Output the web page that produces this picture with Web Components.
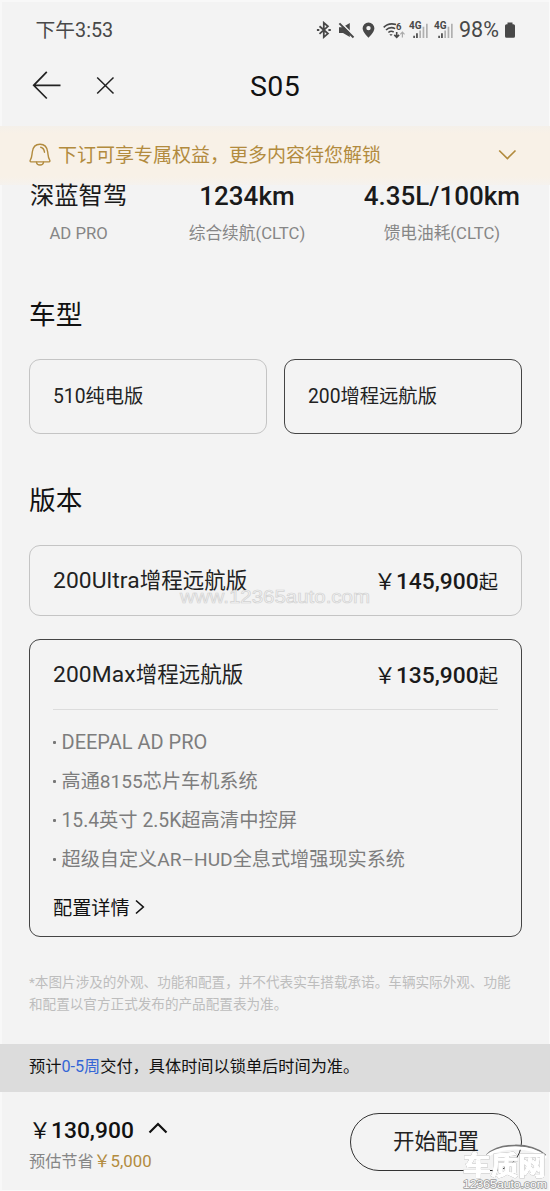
<!DOCTYPE html>
<html lang="zh-CN">
<head>
<meta charset="utf-8">
<title>S05</title>
<style>
html,body{margin:0;padding:0}
body{width:550px;height:1191px;overflow:hidden;background:#f3f3f3;font-family:Roboto,"Noto Sans CJK SC",sans-serif;color:#1a1a1a}
</style>
</head>
<body>
<config-page></config-page>
<script>
const define = (name, css, html) => customElements.define(name, class extends HTMLElement {
  constructor() {
    super();
    this.attachShadow({ mode: 'open' }).innerHTML = `<style>*{box-sizing:border-box}svg{display:block;flex:none}${css}</style>${html}`;
  }
});

define('signal-bars', `
:host{display:block;position:relative;width:20px;height:18px;flex:none}
span{position:absolute;left:0;top:0;font:700 10px/9px Roboto,sans-serif;color:#484848}`,
`<svg width="20" height="18" viewBox="0 0 20 18"><g fill="#484848"><path d="M4.3 14.8h1.6v2.2H4.3zM7.1 12.3h1.7V17H7.1z"/></g><path fill="#b0b0b0" d="M10.3 9.500h1.7v7.500h-1.7zM13.6 5.8h1.7V17h-1.7zM17 2.8h1.7V17H17z"/></svg><span>4G</span>`);

define('status-bar', `
:host{display:flex;height:60px;padding:0 33px 0 35.5px;align-items:center;color:#484848}
.time{font-size:19.8px;line-height:24px;flex:1;padding-top:1px}
.icons{display:flex;align-items:center}
.pct{font-size:21.500px;line-height:24px;margin-left:5px;width:43px}`,
`<div class="time">下午3:53</div>
<div class="icons">
<svg width="16" height="18" viewBox="0 0 16 18" style="margin-right:6px" fill="none" stroke="#484848" stroke-width="1.800"><path d="M3.5 5.2l8.4 7.4-4.1 3.5V1.8l4.1 3.5-8.4 7.5"/><path d="M.9 8.9h2.4M12.400 8.9h2.4" stroke-width="2"/></svg>
<svg width="17" height="18" viewBox="0 0 17 18" style="margin-right:7px"><path fill="#484848" d="M1 6.3h3.6L11.8 2v14L5 12H1z"/><path d="M3.600 2.200L17 15.600" stroke="#f3f3f3" stroke-width="1.600"/><path d="M1.4 2.4L15.500 16.500" stroke="#484848" stroke-width="2"/></svg>
<svg width="13" height="18" viewBox="0 0 13 18" style="margin-right:8px"><path fill="#484848" fill-rule="evenodd" d="M6.5 1.400A5.9 5.9 0 0 0 .6 7.3c0 4.2 5.9 9.5 5.9 9.5s5.9-5.3 5.9-9.5a5.9 5.9 0 0 0-5.9-5.9zm0 3.5a2.2 2.2 0 1 1 0 4.4 2.2 2.2 0 0 1 0-4.4z"/></svg>
<svg width="22" height="18" viewBox="0 0 22 18" style="margin-right:4px" fill="none" stroke="#484848" stroke-width="1.6"><path d="M.7 6.4C4 3 8.500 2.200 13 3.500M3 9c2.400-2.400 6-3 9.200-1.400M5.400 11.500c1.500-1.300 3.600-1.500 5.300-.5"/><path d="M6.400 13.300h3.200L8 15z" fill="#484848" stroke="none"/><path d="M13.700 11v5.200M11.300 13.900l2.400 2.500 2.400-2.500"/><path d="M19.400 16.500v-5.200M17.300 13.400l2.100-2.200 2.100 2.200" stroke="#aaa" stroke-width="1.200"/><text x="13" y="9.200" fill="#484848" stroke="none" font-size="9.500" font-weight="700" font-family="Roboto">6</text></svg>
<signal-bars style="margin-right:5px"></signal-bars><signal-bars></signal-bars>
<span class="pct">98%</span>
<svg width="12" height="18" viewBox="0 0 12 18" style="margin-left:2px;margin-right:1px"><path fill="#484848" d="M3.500 1.500h5v1.700h1A1.500 1.500 0 0 1 11 4.700v10.600a1.500 1.500 0 0 1-1.500 1.500h-7A1.500 1.500 0 0 1 1 15.300V4.700a1.500 1.500 0 0 1 1.500-1.500h1z"/></svg>
</div>`);

define('nav-bar', `
:host{display:grid;grid-template-columns:1fr auto 1fr;height:66px;align-items:start;padding:10px 32px 0}
.l{display:flex;gap:34px;padding-top:1px}
h1{margin:0;font-weight:400;font-size:28.500px;line-height:34px;letter-spacing:.4px;color:#111}`,
`<div class="l"><svg width="30" height="30" viewBox="0 0 30 30" fill="none" stroke="#222" stroke-width="1.700"><path d="M14.800.8L1.700 14.300l13.100 13.200M1.700 14.300h26.800"/></svg>
<svg width="19" height="30" viewBox="0 0 19 30" stroke="#222" stroke-width="1.500"><path d="M1.200 6.500l16.300 16M17.500 6.500l-16.300 16"/></svg></div><h1>S05</h1>`);

define('benefit-banner', `
:host{display:flex;align-items:center;height:59px;padding:0 33px 2px 29px;background:linear-gradient(#f4f0ea,#f8f1e7 12%,#f8f1e7 85%,#f5f2ee);color:#b28b3e}
span{flex:1;font-size:19px;line-height:28px;margin:-2px 0 0 7px;font-family:"Noto Sans CJK SC",sans-serif}`,
`<svg width="22" height="24" viewBox="0 0 22 24" fill="none" stroke="#b28b3e" stroke-width="1.400" stroke-linecap="round" stroke-linejoin="round"><path d="M2 18.900c-.9 0-1.200-.9-.7-1.700 1.600-2.300 1.500-4.600 2-8.200C3.900 4.100 6.900 1.300 11 1.300S18.100 4.100 18.700 9c.5 3.600.4 5.900 2 8.200.5.800.2 1.700-.7 1.700z"/><path d="M7.500 19.200c.3 3.800 6.700 3.800 7 0M11.700 4.200c2.400.5 3.500 2.300 3.800 5"/></svg>
<span><slot></slot></span>
<svg width="19" height="12" viewBox="0 0 19 12" fill="none" stroke="#b28b3e" stroke-width="1.700"><path d="M1.200 1.500l8.200 8 8.100-8"/></svg>`);

define('spec-item', `
:host{display:flex;flex-direction:column;align-items:center;white-space:nowrap}
b{font-weight:var(--fw,500);font-size:var(--fs,26px);line-height:32px;color:#1a1a1a}
small{font-size:16.700px;line-height:24px;margin-top:10px;color:#868686}`,
`<b><slot></slot></b><small><slot name="label"></slot></small>`);

define('section-title', `
:host{display:block;font-size:26.700px;line-height:38px;height:38px;color:#111;padding-left:29px}`, `<slot></slot>`);

define('model-option', `
:host{display:flex;box-sizing:border-box;align-items:center;height:75px;border:1.500px solid #c4c4c4;border-radius:11px;padding:0 23px 4px;font-size:19.300px;color:#222}
:host([selected]){border-color:#444}`, `<slot></slot>`);

define('price-tag', `
:host{display:flex;align-items:baseline;color:#1a1a1a;line-height:30px}
i{font-style:normal;font-family:"Noto Sans CJK SC";font-size:22px;width:22px}
b{font-weight:500;font-size:22.800px}
em{font-style:normal;font-size:19.300px}`,
`<i>￥</i><b><slot></slot></b><em><slot name="suffix"></slot></em>`);

define('version-card', `
:host{display:block;box-sizing:border-box;border:1.500px solid #c4c4c4;border-radius:11px;margin:0 28px 0 29px;padding:0 23px}
:host([selected]){border-color:#444}
header{display:flex;justify-content:space-between;align-items:center;height:69px}
.name{font-size:21.500px;line-height:30px;color:#222}`,
`<header><span class="name"><slot name="name"></slot></span><slot name="price"></slot></header><slot></slot>`);

define('feature-list', `
:host{display:block;border-top:1px solid #dcdcdc;padding-top:13px;color:#7d7d7d;font-size:19.150px;line-height:39px}
div{display:flex;align-items:center}
div:before{content:"";width:3px;height:3px;border-radius:1px;background:#777;margin:0 5.500px 0 0}
a{display:flex;align-items:center;height:38px;margin-top:10px;color:#111;gap:4px}
svg{position:relative;top:-1px}`,
`<div style="font-size:20px">DEEPAL AD PRO</div><div>高通8155芯片车机系统</div><div style="font-size:19.300px">15.4英寸 2.5K超高清中控屏</div><div>超级自定义AR–HUD全息式增强现实系统</div>
<a>配置详情<svg width="12" height="16" viewBox="0 0 12 16" fill="none" stroke="#111" stroke-width="1.600"><path d="M2 1.500l7.300 6.500L2 14.500"/></svg></a>`);

define('buy-bar', `
:host{display:flex;justify-content:space-between;height:99px;padding:21px 28px 0 29px}
.p{display:flex;align-items:center;height:32px;gap:14px}
price-tag{color:#111}
.p svg{position:relative;top:-1px}
small{display:block;font-size:16.200px;line-height:24px;margin-top:3px;color:#868686}
small span{color:#b28b3e;font-size:16.800px}
small i{font-style:normal;font-family:"Noto Sans CJK SC"}
button{all:unset;box-sizing:border-box;width:172px;height:58px;border:1.500px solid #333;border-radius:29px;text-align:center;font-size:21.500px;line-height:56px;color:#222}`,
`<div><div class="p"><price-tag>130,900</price-tag><svg width="20" height="14" viewBox="0 0 20 14" fill="none" stroke="#111" stroke-width="2.200"><path d="M1.500 11.500L10 3l8.500 8.500"/></svg></div>
<small>预估节省<span><i>￥</i>5,000</span></small></div><button>开始配置</button>`);

define('site-mark', `
:host{position:absolute;left:179px;top:584px;width:192px;height:26px}
text{font-family:"Liberation Sans",sans-serif}`,
`<svg width="192" height="26"><text x="1" y="19" font-size="19" textLength="190" lengthAdjust="spacingAndGlyphs" fill="#f6f6f6" fill-opacity=".75" stroke="#d2d2d2" stroke-width=".7">www.12365auto.com</text></svg>`);

define('site-logo', `
:host{position:absolute;left:460px;top:1143px;width:90px;height:48px}`,
`<svg width="90" height="48" viewBox="0 0 90 48"><g fill="none" stroke-linecap="round"><path d="M27 12C39 0 70-1 85 12" stroke="#777" stroke-width="2"/><path d="M26 14C39 2.500 70 1.500 85 14" stroke="#fff" stroke-width="3.200"/></g>
<g fill="#fff" stroke-linejoin="round" stroke="#fff"><g font-family="Noto Sans CJK SC" font-weight="700" font-size="26" style="filter:drop-shadow(.6px .8px .4px #777)"><text x="3" y="31.500" stroke-width="1.200" textLength="83" lengthAdjust="spacingAndGlyphs">车质网</text></g>
<text x="3" y="45" font-family="Liberation Sans" font-size="11.500" paint-order="stroke" stroke="#999" stroke-width="1.500" textLength="84" lengthAdjust="spacingAndGlyphs">12365auto.com</text></g></svg>`);

define('config-page', `
:host{display:block;position:relative;width:550px;height:1191px;overflow:hidden;background:#f3f3f3;box-shadow:inset -1px -1px #fafafa,inset 2px 2px #f8f8f8}
.specs{display:flex;justify-content:space-between;padding:0 30px;height:112px;margin-top:-5px}
.models{display:grid;grid-template-columns:1fr 1fr;gap:17px;margin:25px 28px 0 29px}
.note{font-size:13.600px;line-height:21.500px;color:#bdbdbd;margin:35px 28px 0 29px;height:72px;white-space:nowrap}
.delivery{background:#dcdcdc;height:48px;line-height:46px;font-size:16.200px;padding-left:29px;color:#111}
.delivery span{color:#3566d6}
l-t{font-size:22.800px;letter-spacing:.1px}`,
`<status-bar></status-bar><nav-bar></nav-bar>
<benefit-banner>下订可享专属权益，更多内容待您解锁</benefit-banner>
<div class="specs"><spec-item style="--fs:24.300px;--fw:400">深蓝智驾<span slot="label">AD PRO</span></spec-item><spec-item style="position:relative;left:1.500px">1234km<span slot="label">综合续航(CLTC)</span></spec-item><spec-item>4.35L/100km<span slot="label">馈电油耗(CLTC)</span></spec-item></div>
<section-title style="margin-top:4px">车型</section-title>
<div class="models"><model-option>510纯电版</model-option><model-option selected>200增程远航版</model-option></div>
<section-title style="margin-top:48px">版本</section-title>
<version-card style="margin-top:25px;height:71px"><span slot="name"><l-t>200Ultra</l-t>增程远航版</span><price-tag slot="price">145,900<span slot="suffix">起</span></price-tag></version-card>
<version-card selected style="margin-top:23px;height:298px"><span slot="name"><l-t>200Max</l-t>增程远航版</span><price-tag slot="price">135,900<span slot="suffix">起</span></price-tag><feature-list></feature-list></version-card>
<div class="note">*本图片涉及的外观、功能和配置，并不代表实车搭载承诺。车辆实际外观、功能<br>和配置以官方正式发布的产品配置表为准。</div>
<div class="delivery">预计<span>0-5周</span>交付，具体时间以锁单后时间为准。</div>
<buy-bar></buy-bar><site-mark></site-mark><site-logo></site-logo>`);
define('l-t', `:host{display:inline}`, `<slot></slot>`);
</script>
</body>
</html>
